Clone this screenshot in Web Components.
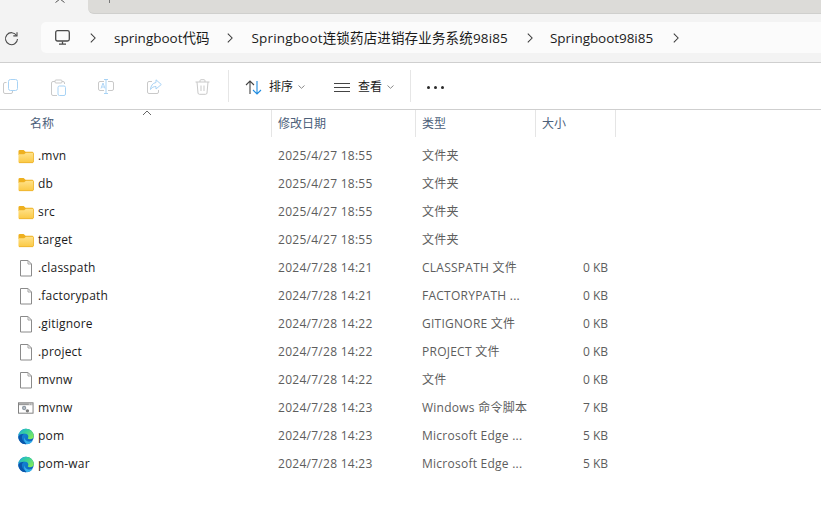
<!DOCTYPE html>
<html><head><meta charset="utf-8">
<style>html,body{margin:0;padding:0;background:#fff;overflow:hidden}body{width:821px;height:530px;font-family:"Open Sans","Noto Sans CJK SC",sans-serif}</style>
</head><body>
<fx-window></fx-window>
<script>
const ICONS={
 folder:`<svg width="17" height="15" viewBox="0 0 17 15"><path d="M.5 2Q.5 .5 2 .5H6L8 2.500H15Q16.500 2.500 16.500 4V6H.5Z" fill="#eeb01f"/><defs><linearGradient id="f1" x1="0" y1="0" x2="0" y2="1"><stop offset="0" stop-color="#ffe28a"/><stop offset="1" stop-color="#fbc945"/></linearGradient></defs><path d="M.5 13V5L6.500 5 8.500 3.500H15.500Q16.500 3.500 16.500 4.500V13Q16.500 14 15.500 14H1.500Q.5 14 .5 13Z" fill="url(#f1)"/><path d="M1 14H16" stroke="#eeb01f" stroke-width="1"/><path d="M16.500 4V13.500" stroke="#f0bb3a" stroke-width="1"/></svg>`,
 file:`<svg width="14" height="17" viewBox="0 0 14 17"><path d="M1.500.5H9L12.500 4V16H1.500Z" fill="#fff" stroke="#8a8a8a"/><path d="M9 .5V4H12.500" fill="none" stroke="#a5a5a5"/></svg>`,
 cmd:`<svg width="17" height="14" viewBox="0 0 17 14"><rect x=".5" y="1.500" width="15.500" height="11" fill="#fff" stroke="#7b7b7b"/><rect x="1" y="2" width="14.500" height="2" fill="#9a9a9a"/><rect x="11.500" y="2.400" width="1" height="1" fill="#fff"/><rect x="13.500" y="2.400" width="1" height="1" fill="#fff"/><circle cx="6.500" cy="7" r="2.300" fill="#8f9aa5"/><circle cx="6.500" cy="7" r=".8" fill="#e6e6e6"/><circle cx="10" cy="10" r="1.800" fill="#7c7c7c"/></svg>`,
 edge:`<svg width="17" height="17" viewBox="0 0 17 17"><defs><linearGradient id="e1" x1="0" y1="0" x2="1" y2="1"><stop offset="0" stop-color="#1796e0"/><stop offset="1" stop-color="#0a5cb8"/></linearGradient><linearGradient id="e2" x1="0" y1="0" x2="1" y2=".8"><stop offset="0" stop-color="#1fa8e6"/><stop offset=".42" stop-color="#35cfa0"/><stop offset="1" stop-color="#84ec58"/></linearGradient></defs><circle cx="8.500" cy="8.500" r="8.300" fill="url(#e1)"/><path d="M.6 7C1.800 2.800 5 .2 8.500 .2C13 .2 16.800 3.500 16.800 8.300C16.800 10.600 14.800 11.400 12.500 11.400C10.800 11.400 9.800 11 10.800 9.600C11.600 8.100 10.200 5.700 7.500 5.700C4.500 5.700 2 5.800 .6 7Z" fill="url(#e2)"/><path d="M7.300 5.700C5 6 3.800 8 4.200 10.300C4.700 13 7 15.100 9.800 15.600C8.800 16.800 7.500 16.800 6.500 16.600C3 15.800 .4 12.500 .3 9C1.200 7 4.500 5.700 7.300 5.700Z" fill="#0a56ab"/><path d="M9.800 16.700C12.800 16.500 14.800 15 15.900 12.600C14.600 13.800 12 14.200 10 13.500C8 12.800 6.800 11 7 9.300C5.800 11.800 6.800 15.400 9.800 16.700Z" fill="#36b0ea"/></svg>`
};
class FxIcon extends HTMLElement{
 constructor(){super();this.attachShadow({mode:'open'}).innerHTML=`<style>:host{display:inline-flex;align-items:center;justify-content:center;flex:none}svg{display:block}</style>`+(ICONS[this.getAttribute('name')]||'');}
}
customElements.define('fx-icon',FxIcon);

class FxTabs extends HTMLElement{
 constructor(){super();this.attachShadow({mode:'open'}).innerHTML=`<style>
 :host{display:flex;height:14px;background:#f3f3f3;flex:none}
 .a{width:88px;flex:none;display:flex;justify-content:flex-end}
 .a svg{margin:-1px 21px 0 0}
 .b{flex:1;background:#dcdbd8;border-bottom-left-radius:6px;border-bottom:1px solid #cfcfcd;box-sizing:border-box;padding-left:21px}
 .b i{display:block;width:1px;height:3px;background:#777}
 </style><div class="a"><svg width="14" height="5" viewBox="0 0 14 5"><path d="M2.500 3.500L7 0 11.500 3.500" fill="none" stroke="#555" stroke-width="1"/></svg></div><div class="b"><i></i></div>`;}
}
customElements.define('fx-tabs',FxTabs);

class FxCrumb extends HTMLElement{
 constructor(){super();this.attachShadow({mode:'open'}).innerHTML=`<style>
 :host{display:inline-flex;align-items:center;flex:none}
 svg{display:block;flex:none;margin-left:var(--gap,18px)}
 span{font:13.500px/20px "Open Sans","Noto Sans CJK SC",sans-serif;color:#1b1b1b;white-space:nowrap}
 </style><span><slot></slot></span><svg width="6" height="10" viewBox="0 0 6 10"><path d="M.8 .6L5.100 5 .8 9.400" fill="none" stroke="#3c3c3c" stroke-width="1.050"/></svg>`;}
}
customElements.define('fx-crumb',FxCrumb);

class FxAddress extends HTMLElement{
 constructor(){super();this.attachShadow({mode:'open'}).innerHTML=`<style>
 :host{display:flex;align-items:center;height:49px;box-sizing:border-box;background:#f3f3f3;border-bottom:1px solid #cfcfcf;flex:none;padding:0 0 0 4px}
 .r{width:15px;height:15px;flex:none;margin-right:22px}
 .box{width:780px;height:31px;box-sizing:border-box;background:#fbfbfb;border-radius:5px 0 0 5px;display:flex;align-items:center;padding-left:14px;margin-bottom:1px}
 .m{margin-right:20px;flex:none;display:block}
 fx-crumb{margin-right:19px}
 .z{--gap:0px;margin-right:18px}
 </style>
 <svg class="r" viewBox="0 0 15 15"><path d="M12.600 4.500A6 6 0 1 0 13.500 8" fill="none" stroke="#4a4a4a" stroke-width="1.100"/><path d="M13 1.200V4.900H9.300" fill="none" stroke="#4a4a4a" stroke-width="1.100"/></svg>
 <div class="box">
 <svg class="m" width="15" height="15" viewBox="0 0 15 15"><rect x=".7" y=".7" width="13.600" height="10.300" rx="1.800" fill="none" stroke="#4a4a4a" stroke-width="1.300"/><path d="M7.500 11.500V14M4 14.200H11" stroke="#4a4a4a" stroke-width="1.300" fill="none"/></svg>
 <fx-crumb class="z"></fx-crumb>
 <fx-crumb style="--gap:17px">springboot代码</fx-crumb>
 <fx-crumb style="letter-spacing:.16px;--gap:19px;margin-right:17px">Springboot连锁药店进销存业务系统98i85</fx-crumb>
 <fx-crumb style="--gap:20px;letter-spacing:-.05px">Springboot98i85</fx-crumb>
 </div>`;}
}
customElements.define('fx-address',FxAddress);

class FxToolbar extends HTMLElement{
 constructor(){super();const chev=`<svg class="c" width="7" height="4" viewBox="0 0 7 4"><path d="M.5 .5L3.500 3.300 6.500 .5" fill="none" stroke="#8a8a8a"/></svg>`;
 this.attachShadow({mode:'open'}).innerHTML=`<style>
 :host{display:flex;align-items:center;height:47px;box-sizing:border-box;background:#fff;border-bottom:1px solid #cfcfcf;flex:none;padding:2px 0 0 3px;font:12px/16px "Open Sans","Noto Sans CJK SC",sans-serif;color:#1b1b1b}
 .d{display:flex;gap:32px;width:225px;flex:none}
 svg{display:block;flex:none}
 .sep{width:1px;height:32px;background:#e6e6e6;flex:none;position:relative;top:-1px}
 .b{display:flex;align-items:center;flex:none}
 .c{margin-left:5px}
 </style>
 <div class="d">
 <svg width="15" height="16" viewBox="0 0 15 16"><path d="M3.500 3.500H2Q.5 3.500 .5 5V13Q.5 14.500 2 14.500H8Q9.500 14.500 9.500 13V12" fill="none" stroke="#c9c9c9"/><rect x="5.500" y=".5" width="9" height="11" rx="2" fill="none" stroke="#a8d3f5"/></svg>
 <svg width="15" height="17" viewBox="0 0 15 17" style="margin-left:1px;margin-right:2px"><path d="M4 2.500H2Q.5 2.500 .5 4V15Q.5 16.500 2 16.500H6M11 2.500H12Q13.500 2.500 13.500 4V5" fill="none" stroke="#c9c9c9"/><rect x="4" y="1" width="7" height="3" rx="1" fill="#fff" stroke="#c9c9c9"/><rect x="7" y="7" width="7.500" height="9.500" rx="1.500" fill="none" stroke="#a8d3f5"/></svg>
 <svg width="16" height="15" viewBox="0 0 16 15" style="margin-left:-2px"><path d="M6 2.500H2Q.5 2.500 .5 4V10Q.5 11.500 2 11.500H6M10 2.500H14Q15.500 2.500 15.500 4V10Q15.500 11.500 14 11.500H10" fill="none" stroke="#c9c9c9"/><path d="M6 .5H10M8 .5V14M6 14.500H10" fill="none" stroke="#a8d3f5"/><path d="M3 9.500L5 4 7 9.500M3.700 8H6.300" fill="none" stroke="#a8d3f5" stroke-width=".9"/></svg>
 <svg width="15" height="15" viewBox="0 0 15 15" style="margin-left:1px"><path d="M5 2.500H2Q.5 2.500 .5 4V13Q.5 14.500 2 14.500H10Q11.500 14.500 11.500 13V11" fill="none" stroke="#c9c9c9"/><path d="M9 .8L14.300 5.500 9 10V7.500C6.500 7.500 4.800 8.500 3.500 10.500C3.800 7 5.500 4 9 3.500Z" fill="none" stroke="#a8d3f5"/></svg>
 <svg width="15" height="16" viewBox="0 0 15 16" style="margin-left:1px"><path d="M.5 3H14.500M5 3V1.800Q5 .7 6 .7H9Q10 .7 10 1.800V3M2 3L3 14Q3.100 15.300 4.500 15.300H10.500Q11.900 15.300 12 14L13 3M6 6.500V12M9 6.500V12" fill="none" stroke="#c9c9c9"/></svg>
 </div>
 <div class="sep"></div>
 <div class="b" style="margin-left:16px"><svg width="17" height="15" viewBox="0 0 17 15"><path d="M5 14V1M1 5L5 1 9 5" fill="none" stroke="#444" stroke-width="1.100"/><path d="M12 1V14M8 10L12 14 16 10" fill="none" stroke="#1f8ce0" stroke-width="1.100"/></svg><span style="margin-left:7px">排序</span>${chev}</div>
 <div class="b" style="margin-left:29px"><svg width="16" height="11" viewBox="0 0 16 11"><path d="M0 1.500H16M0 5.500H16M0 9.500H16" stroke="#444"/></svg><span style="margin-left:8px">查看</span>${chev}</div>
 <div class="sep" style="margin-left:16px"></div>
 <svg style="margin-left:16px" width="17" height="3" viewBox="0 0 17 3"><circle cx="1.500" cy="1.500" r="1.500" fill="#2a2a2a"/><circle cx="8.500" cy="1.500" r="1.500" fill="#2a2a2a"/><circle cx="15.500" cy="1.500" r="1.500" fill="#2a2a2a"/></svg>`;}
}
customElements.define('fx-toolbar',FxToolbar);

class FxHeader extends HTMLElement{
 constructor(){super();this.attachShadow({mode:'open'}).innerHTML=`<style>
 :host{display:grid;grid-template-columns:272px 144px 120px 80px;height:27px;flex:none;position:relative;width:616px;font:12px/16px "Open Sans","Noto Sans CJK SC",sans-serif;color:#4c607a}
 div{box-sizing:border-box;border-right:1px solid #e5e5e5;padding:6px 0 0 6px;height:27px}
 div.f{padding-left:30px}
 svg{position:absolute;left:142px;top:0}
 </style><svg width="10" height="6" viewBox="0 0 10 6"><path d="M1 5L5 1 9 5" fill="none" stroke="#666" stroke-width="1"/></svg>
 <div class="f">名称</div><div>修改日期</div><div>类型</div><div>大小</div>`;}
}
customElements.define('fx-header',FxHeader);

class FxRow extends HTMLElement{
 constructor(){super();const a=n=>this.getAttribute(n)||'';
 this.attachShadow({mode:'open'}).innerHTML=`<style>
 :host{display:grid;grid-template-columns:272px 144px 120px 72px;height:28px;align-items:center;font:12px/16px "Open Sans","Noto Sans CJK SC",sans-serif;color:#5d5d5d}
 .n{display:flex;align-items:center;color:#1b1b1b;padding-left:18px;box-sizing:border-box;letter-spacing:.2px}
 fx-icon{width:16px;margin-right:4px}
 .d{padding-left:6px;letter-spacing:.27px}.t{padding-left:6px;white-space:nowrap;letter-spacing:.25px}.s{text-align:right;white-space:nowrap}
 </style><div class="n"><fx-icon name="${a('icon')}"></fx-icon><span>${a('name')}</span></div><div class="d">${a('date')}</div><div class="t">${a('type')}</div><div class="s">${a('size')}</div>`;}
}
customElements.define('fx-row',FxRow);

class FxWindow extends HTMLElement{
 constructor(){super();const D=[
 ['folder','.mvn','2025/4/27 18:55','文件夹',''],['folder','db','2025/4/27 18:55','文件夹',''],['folder','src','2025/4/27 18:55','文件夹',''],['folder','target','2025/4/27 18:55','文件夹',''],
 ['file','.classpath','2024/7/28 14:21','CLASSPATH 文件','0 KB'],['file','.factorypath','2024/7/28 14:21','FACTORYPATH ...','0 KB'],['file','.gitignore','2024/7/28 14:22','GITIGNORE 文件','0 KB'],['file','.project','2024/7/28 14:22','PROJECT 文件','0 KB'],['file','mvnw','2024/7/28 14:22','文件','0 KB'],['cmd','mvnw','2024/7/28 14:23','Windows 命令脚本','7 KB'],['edge','pom','2024/7/28 14:23','Microsoft Edge ...','5 KB'],['edge','pom-war','2024/7/28 14:23','Microsoft Edge ...','5 KB']];
 this.attachShadow({mode:'open'}).innerHTML=`<style>
 :host{display:flex;flex-direction:column;width:821px;height:530px;background:#fff;overflow:hidden}
 .list{padding-top:5px}
 </style><fx-tabs></fx-tabs><fx-address></fx-address><fx-toolbar></fx-toolbar><fx-header></fx-header><div class="list">${D.map(r=>`<fx-row icon="${r[0]}" name="${r[1]}" date="${r[2]}" type="${r[3]}" size="${r[4]}"></fx-row>`).join('')}</div>`;}
}
customElements.define('fx-window',FxWindow);
</script>
</body></html>
